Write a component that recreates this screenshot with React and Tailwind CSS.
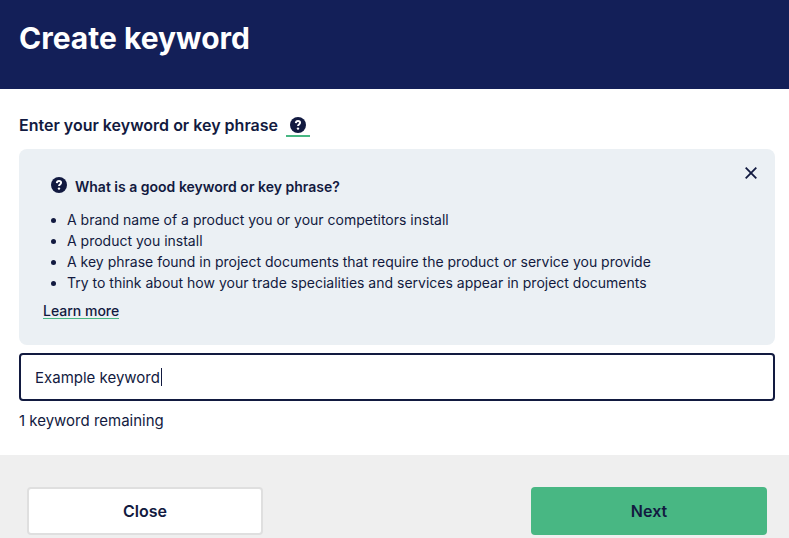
import React, { useState } from "react";

function HelpIcon() {
  return (
    <svg width="16" height="16" viewBox="0 0 16 16" className="shrink-0" aria-hidden="true">
      <circle cx="8" cy="8" r="8" fill="#121a40" />
      <path
        d="M5.8 6.1C5.9 4.7 6.7 4 8 4c1.3 0 2.1.7 2.1 1.8 0 .9-.5 1.2-1.1 1.6-.7.5-1 .8-1 1.7"
        fill="none"
        stroke="#fff"
        strokeWidth="1.9"
      />
      <circle cx="8" cy="11.6" r="1.2" fill="#fff" />
    </svg>
  );
}

const tips = [
  "A brand name of a product you or your competitors install",
  "A product you install",
  "A key phrase found in project documents that require the product or service you provide",
  "Try to think about how your trade specialities and services appear in project documents",
];

const initialKeyword = "Example keyword";

export default function App() {
  const [keyword, setKeyword] = useState(initialKeyword);
  const untouched = keyword === initialKeyword;
  return (
    <div className="flex min-h-screen flex-col bg-white font-['Inter',sans-serif] text-[#121a40]">
      <header className="bg-[#131f58] pt-5 pr-[14px] pb-8 pl-[19px]">
        <h1 className="text-[30px] leading-[37px] font-bold text-white">Create keyword</h1>
      </header>
      <main className="pt-6 pr-[14px] pb-[22px] pl-[19px]">
        <div className="flex h-6 items-center gap-2">
          <label htmlFor="keyword" className="text-base font-semibold">
            Enter your keyword or key phrase
          </label>
          <button type="button" aria-label="Help" className="flex h-6 w-6 justify-center border-b-2 border-[#48b783] pt-1">
            <HelpIcon />
          </button>
        </div>
        <section className="mt-3 rounded-lg bg-[#ebf0f4] px-6 pt-4 pb-[26px]">
          <div className="flex justify-between">
            <h2 className="flex items-start gap-2 pt-3 pl-2 text-sm leading-5 font-semibold">
              <HelpIcon />
              What is a good keyword or key phrase?
            </h2>
            <button type="button" aria-label="Dismiss" className="-mr-2 flex h-4 w-4 items-center justify-center">
              <svg width="12" height="12" viewBox="0 0 12 12" stroke="#121a40" strokeWidth="1.8" aria-hidden="true">
                <path d="M0.7 0.7 11.3 11.3M11.3 0.7 0.7 11.3" />
              </svg>
            </button>
          </div>
          <ul className="mt-3 list-disc pl-6 text-sm leading-[21px]">
            {tips.map((tip) => (
              <li key={tip}>{tip}</li>
            ))}
          </ul>
          <a
            href="#learn"
            className="mt-[10px] block w-fit border-b border-[#48b783] text-sm leading-[15px] font-medium"
          >
            Learn more
          </a>
        </section>
        <div className="relative mt-2">
          <input
            id="keyword"
            type="text"
            autoFocus
            value={keyword}
            onChange={(e) => setKeyword(e.target.value)}
            className={
              "block h-12 w-full rounded border-2 border-[#121a40] px-[14px] text-[15px] outline-none " +
              (untouched ? "caret-transparent" : "caret-[#121a40]")
            }
          />
          {untouched && (
            <span aria-hidden="true" className="pointer-events-none absolute top-[15px] left-[142px] h-[18px] w-px bg-[#121a40]" />
          )}
        </div>
        <p className="mt-2 text-[15px] leading-6">1 keyword remaining</p>
      </main>
      <footer className="flex grow justify-between bg-[#efefef] pt-8 pr-[22px] pb-[3px] pl-[27px]">
        <button type="button" className="h-12 w-[236px] rounded border-2 border-[#dfdfdf] bg-white font-semibold">
          Close
        </button>
        <button type="button" className="h-12 w-[236px] rounded bg-[#48b783] font-semibold">
          Next
        </button>
      </footer>
    </div>
  );
}
